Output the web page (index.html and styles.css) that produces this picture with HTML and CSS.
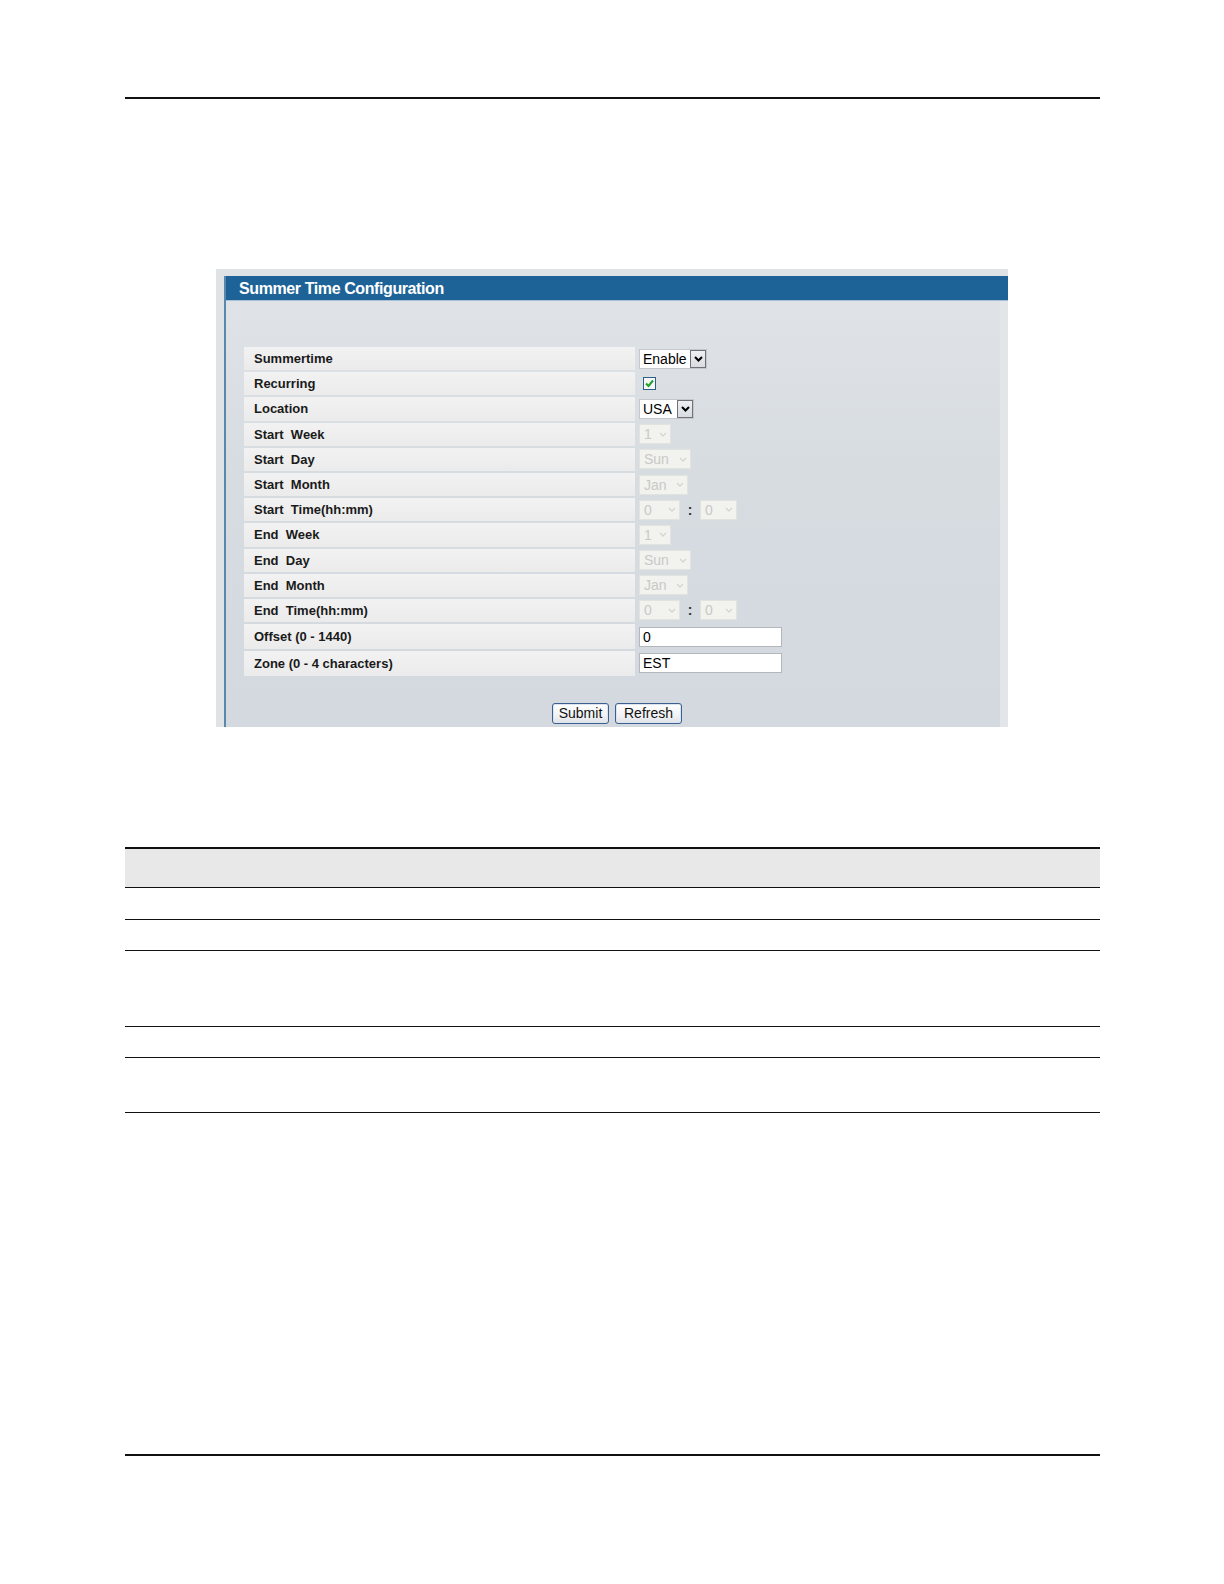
FILE: index.html
```html
<!DOCTYPE html>
<html>
<head>
<meta charset="utf-8">
<link rel="stylesheet" href="styles.css">
</head>
<body>
<div class="page">
  <div class="rule"></div>
  <div class="frame">
    <div class="panel">
      <div class="panel-head">Summer Time Configuration</div>
      <div class="panel-body">
        <div class="form">
          <div class="row"><div class="label">Summertime</div><div class="value">
            <div class="sel on w-enable"><span class="sel-text">Enable</span><span class="sel-btn"><svg width="9" height="6" viewBox="0 0 9 6"><path d="M1 1 L4.5 4.5 L8 1" fill="none" stroke="#000" stroke-width="2"/></svg></span></div>
          </div></div>
          <div class="row"><div class="label">Recurring</div><div class="value">
            <span class="check"><svg width="11" height="11" viewBox="0 0 11 11"><path d="M2 5.5 L4.5 8 L9 2.5" fill="none" stroke="#1fa02a" stroke-width="2"/></svg></span>
          </div></div>
          <div class="row"><div class="label">Location</div><div class="value">
            <div class="sel on w-usa"><span class="sel-text">USA</span><span class="sel-btn"><svg width="9" height="6" viewBox="0 0 9 6"><path d="M1 1 L4.5 4.5 L8 1" fill="none" stroke="#000" stroke-width="2"/></svg></span></div>
          </div></div>
          <div class="row"><div class="label">Start&nbsp; Week</div><div class="value">
            <div class="sel off w-1"><span class="sel-text">1</span><span class="dis-arrow"><svg width="8" height="5" viewBox="0 0 8 5"><path d="M1 1 L4 4 L7 1" fill="none" stroke="#d4d4d0" stroke-width="1.3"/></svg></span></div>
          </div></div>
          <div class="row"><div class="label">Start&nbsp; Day</div><div class="value">
            <div class="sel off w-sun"><span class="sel-text">Sun</span><span class="dis-arrow"><svg width="8" height="5" viewBox="0 0 8 5"><path d="M1 1 L4 4 L7 1" fill="none" stroke="#d4d4d0" stroke-width="1.3"/></svg></span></div>
          </div></div>
          <div class="row"><div class="label">Start&nbsp; Month</div><div class="value">
            <div class="sel off w-jan"><span class="sel-text">Jan</span><span class="dis-arrow"><svg width="8" height="5" viewBox="0 0 8 5"><path d="M1 1 L4 4 L7 1" fill="none" stroke="#d4d4d0" stroke-width="1.3"/></svg></span></div>
          </div></div>
          <div class="row"><div class="label">Start&nbsp; Time(hh:mm)</div><div class="value">
            <div class="sel off w-h"><span class="sel-text">0</span><span class="dis-arrow"><svg width="8" height="5" viewBox="0 0 8 5"><path d="M1 1 L4 4 L7 1" fill="none" stroke="#d4d4d0" stroke-width="1.3"/></svg></span></div>
            <span class="colon">:</span>
            <div class="sel off w-m"><span class="sel-text">0</span><span class="dis-arrow"><svg width="8" height="5" viewBox="0 0 8 5"><path d="M1 1 L4 4 L7 1" fill="none" stroke="#d4d4d0" stroke-width="1.3"/></svg></span></div>
          </div></div>
          <div class="row"><div class="label">End&nbsp; Week</div><div class="value">
            <div class="sel off w-1"><span class="sel-text">1</span><span class="dis-arrow"><svg width="8" height="5" viewBox="0 0 8 5"><path d="M1 1 L4 4 L7 1" fill="none" stroke="#d4d4d0" stroke-width="1.3"/></svg></span></div>
          </div></div>
          <div class="row"><div class="label">End&nbsp; Day</div><div class="value">
            <div class="sel off w-sun"><span class="sel-text">Sun</span><span class="dis-arrow"><svg width="8" height="5" viewBox="0 0 8 5"><path d="M1 1 L4 4 L7 1" fill="none" stroke="#d4d4d0" stroke-width="1.3"/></svg></span></div>
          </div></div>
          <div class="row"><div class="label">End&nbsp; Month</div><div class="value">
            <div class="sel off w-jan"><span class="sel-text">Jan</span><span class="dis-arrow"><svg width="8" height="5" viewBox="0 0 8 5"><path d="M1 1 L4 4 L7 1" fill="none" stroke="#d4d4d0" stroke-width="1.3"/></svg></span></div>
          </div></div>
          <div class="row"><div class="label">End&nbsp; Time(hh:mm)</div><div class="value">
            <div class="sel off w-h"><span class="sel-text">0</span><span class="dis-arrow"><svg width="8" height="5" viewBox="0 0 8 5"><path d="M1 1 L4 4 L7 1" fill="none" stroke="#d4d4d0" stroke-width="1.3"/></svg></span></div>
            <span class="colon">:</span>
            <div class="sel off w-m"><span class="sel-text">0</span><span class="dis-arrow"><svg width="8" height="5" viewBox="0 0 8 5"><path d="M1 1 L4 4 L7 1" fill="none" stroke="#d4d4d0" stroke-width="1.3"/></svg></span></div>
          </div></div>
          <div class="row tall"><div class="label">Offset (0 - 1440)</div><div class="value">
            <div class="txt">0</div>
          </div></div>
          <div class="row zone"><div class="label">Zone (0 - 4 characters)</div><div class="value">
            <div class="txt">EST</div>
          </div></div>
        </div>
        <div class="buttons">
          <span class="btn btn-submit">Submit</span>
          <span class="btn btn-refresh">Refresh</span>
        </div>
      </div>
    </div>
  </div>
  <div class="desc">
    <div class="drow dhead"></div>
    <div class="drow r32"></div>
    <div class="drow r32"></div>
    <div class="drow r76"></div>
    <div class="drow r32"></div>
    <div class="drow r55"></div>
  </div>
  <div class="rule bottom"></div>
</div>
</body>
</html>
```

FILE: styles.css
```css
html, body {
  margin: 0;
  padding: 0;
  background: #ffffff;
  overflow: hidden;
}
body {
  font-family: "Liberation Sans", Arial, sans-serif;
  width: 1224px;
  height: 1584px;
}
.page {
  width: 975px;
  padding: 97px 0 0 125px;
}
.rule {
  height: 2px;
  background: #111;
}
.rule.bottom {
  margin-top: 341px;
}
.frame {
  margin: 170px 0 0 91px;
  width: 792px;
  height: 458px;
  box-sizing: border-box;
  padding: 7px 0 0 8px;
  background: #e0e3e6;
}
.panel {
  height: 100%;
  border-left: 2px solid #5a88ad;
  display: flex;
  flex-direction: column;
}
.panel-head {
  height: 24px;
  flex: none;
  background: #1e6398;
  border-bottom: 1px solid #a9c0d4;
  color: #fff;
  font-weight: bold;
  font-size: 16px;
  letter-spacing: -0.4px;
  line-height: 25px;
  padding-left: 13px;
}
.panel-body {
  flex: 1;
  padding: 46px 0 0 18px;
  border-right: 8px solid #e2e6e9;
  background: linear-gradient(180deg, #dfe3e7 0%, #d7dce1 40%, #d3d9df 100%);
}
.form {
  display: flex;
  flex-direction: column;
  gap: 2px;
}
.row {
  display: flex;
  height: 23.2px;
}
.row.tall {
  height: 25px;
}
.row.zone {
  height: 24.5px;
}
.label {
  width: 381px;
  padding-left: 10px;
  background: linear-gradient(180deg, #f2f2f2 0%, #ebebeb 100%);
  display: flex;
  align-items: center;
  font-size: 13px;
  font-weight: bold;
  color: #1a1a1a;
  margin-right: 2px;
}
.value {
  display: flex;
  align-items: center;
  padding-left: 2px;
}
.sel {
  height: 20px;
  box-sizing: border-box;
  display: flex;
  align-items: center;
  font-size: 14px;
}
.sel.on {
  background: #fff;
  border: 1px solid #c4c8cc;
}
.sel.on .sel-text {
  flex: 1;
  padding-left: 3px;
  color: #000;
}
.sel-btn {
  width: 16px;
  height: 18px;
  box-sizing: border-box;
  border: 1px solid #6f7379;
  background: linear-gradient(180deg, #eef0f2, #d8dce0);
  display: flex;
  align-items: center;
  justify-content: center;
}
.w-enable { width: 68px; }
.w-usa { width: 55px; }
.sel.off {
  background: #f2f2ef;
  border: 1px solid #e2e3de;
  color: #c9c9c6;
}
.sel.off .sel-text {
  flex: 1;
  padding-left: 4px;
}
.dis-arrow {
  width: 14px;
  display: flex;
  justify-content: center;
}
.w-1 { width: 32px; }
.w-sun { width: 52px; }
.w-jan { width: 49px; }
.w-h { width: 41px; }
.w-m { width: 37px; }
.colon {
  font-size: 14px;
  font-weight: bold;
  color: #333;
  width: 20px;
  text-align: center;
}
.check {
  width: 13px;
  height: 13px;
  box-sizing: border-box;
  margin-left: 4px;
  border: 1px solid #2e5f8a;
  background: #f6f8f6;
  display: flex;
  align-items: center;
  justify-content: center;
}
.txt {
  width: 143px;
  height: 20px;
  box-sizing: border-box;
  background: #fff;
  border: 1px solid #b3b7bb;
  font-size: 14px;
  line-height: 18px;
  padding-left: 3px;
  color: #000;
}
.buttons {
  display: flex;
  gap: 6px;
  margin: 27px 0 0 308px;
}
.btn {
  height: 21px;
  box-sizing: border-box;
  border: 1px solid #3a5f91;
  border-radius: 3px;
  background: linear-gradient(180deg, #ffffff 0%, #f1f2f4 60%, #dfe2e7 100%);
  box-shadow: inset 0 0 0 1px #dce4ef;
  font-size: 14px;
  line-height: 19px;
  color: #111;
  text-align: center;
}
.btn-submit { width: 57px; }
.btn-refresh { width: 67px; }
.desc {
  margin-top: 120px;
  width: 975px;
  border-top: 2px solid #111;
}
.drow {
  border-bottom: 1.5px solid #111;
}
.dhead {
  height: 38px;
  background: #e8e8e8;
}
.r32 { height: 30.5px; }
.r76 { height: 74.5px; }
.r55 { height: 53.5px; }
```
